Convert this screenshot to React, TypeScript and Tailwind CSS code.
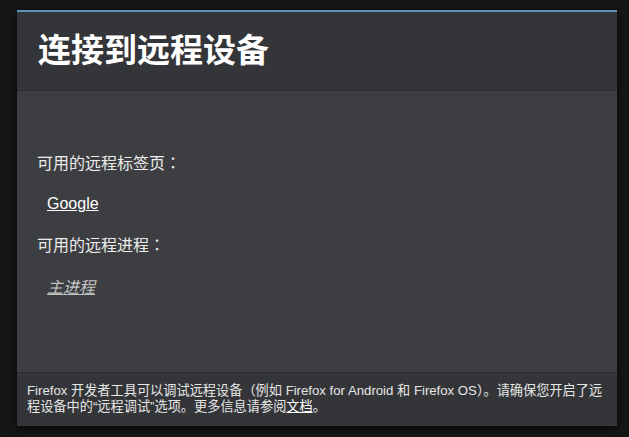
import React from 'react';

const font = { fontFamily: '"Liberation Sans", "Noto Sans CJK SC", sans-serif' };

const Colon: React.FC = () => (
  <span className="[font-family:'Liberation_Sans','Noto_Sans_CJK_TC',sans-serif]">：</span>
);

const App: React.FC = () => {
  return (
    <div className="w-full h-[437px] bg-[#161616] pt-[10px] overflow-hidden" style={font}>
      <div className="ml-[17px] w-[600px] h-[416px] flex flex-col border-t-2 border-[#5f93b5] shadow-[0_2px_8px_rgba(0,0,0,0.7)]">
        {/* Header */}
        <header className="h-[79px] flex items-center pl-[21px] bg-[#343538] border-b border-[#2f3033]">
          <h1 className="text-[33px] leading-[40px] font-bold text-white">连接到远程设备</h1>
        </header>

        {/* Body */}
        <main className="flex-1 bg-[#3d3e41] pt-[63px] pl-[20px] text-[16px] leading-[20px] text-[#ececec]">
          <p>可用的远程标签页<Colon /></p>
          <ul className="mt-[20px] pl-[10px]">
            <li>
              <a className="underline text-white" href="#">Google</a>
            </li>
          </ul>
          <p className="mt-[22px]">可用的远程进程<Colon /></p>
          <ul className="mt-[22px] pl-[10px]">
            <li>
              <a className="underline italic text-[#c4c4c4]" href="#">主进程</a>
            </li>
          </ul>
        </main>

        {/* Footer */}
        <footer className="h-[54px] bg-[#343538] border-t border-[#2c2d30] px-[10px] pt-[10px] text-[13.2px] leading-[16px] text-[#e6e6e6]">
          Firefox 开发者工具可以调试远程设备（例如 Firefox for Android 和 Firefox OS）。请确保您开启了远程设备中的“远程调试”选项。更多信息请参阅<a className="underline text-white" href="#">文档</a>。
        </footer>
      </div>
    </div>
  );
};

export default App;
